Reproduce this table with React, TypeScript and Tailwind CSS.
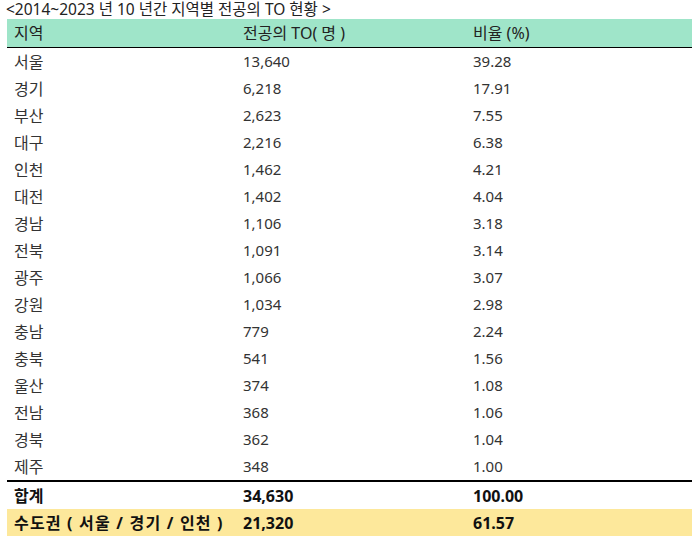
import React from "react";

const rows: [string, string, string][] = [
  ["서울", "13,640", "39.28"],
  ["경기", "6,218", "17.91"],
  ["부산", "2,623", "7.55"],
  ["대구", "2,216", "6.38"],
  ["인천", "1,462", "4.21"],
  ["대전", "1,402", "4.04"],
  ["경남", "1,106", "3.18"],
  ["전북", "1,091", "3.14"],
  ["광주", "1,066", "3.07"],
  ["강원", "1,034", "2.98"],
  ["충남", "779", "2.24"],
  ["충북", "541", "1.56"],
  ["울산", "374", "1.08"],
  ["전남", "368", "1.06"],
  ["경북", "362", "1.04"],
  ["제주", "348", "1.00"],
];

function Row({
  a,
  b,
  c,
  cls = "",
  acls = "",
  ncls = "text-[15px]",
}: {
  a: string;
  b: string;
  c: string;
  cls?: string;
  acls?: string;
  ncls?: string;
}) {
  return (
    <div className={`grid grid-cols-[236px_230px_1fr] h-[27px] items-center ${cls}`}>
      <div className={`pl-[7px] whitespace-nowrap ${acls}`}>{a}</div>
      <div className={ncls}>{b}</div>
      <div className={ncls}>{c}</div>
    </div>
  );
}

export default function App() {
  return (
    <div
      className="w-[699px] h-[538px] bg-white text-[#333] overflow-hidden"
      style={{ fontFamily: '"Noto Sans", "Noto Sans CJK KR", sans-serif' }}
    >
      <div className="h-[19px] pl-[6px] text-[15.5px] leading-[18px] text-[#222] whitespace-nowrap">
        &lt;2014~2023 년 10 년간 지역별 전공의 TO 현황 &gt;
      </div>
      <div className="ml-[7px] mr-[7px] text-[16px]">
        <div className="border-b-[1.5px] border-black">
          <Row
            a="지역"
            b="전공의 TO( 명 )"
            c="비율 (%)"
            cls="bg-[#9fe5c9] h-[28px] text-[#222]"
            ncls="text-[16px]"
          />
        </div>
        <div className="border-b-2 border-black">
          {rows.map((r) => (
            <Row key={r[0]} a={r[0]} b={r[1]} c={r[2]} />
          ))}
        </div>
        <Row a="합계" b="34,630" c="100.00" cls="font-bold text-[#111]" ncls="text-[16px]" />
        <Row
          a="수도권 ( 서울 / 경기 / 인천 )"
          b="21,320"
          c="61.57"
          cls="font-bold text-[#111] bg-[#fde89b]"
          acls="tracking-[1.2px]"
          ncls="text-[16px]"
        />
      </div>
    </div>
  );
}
